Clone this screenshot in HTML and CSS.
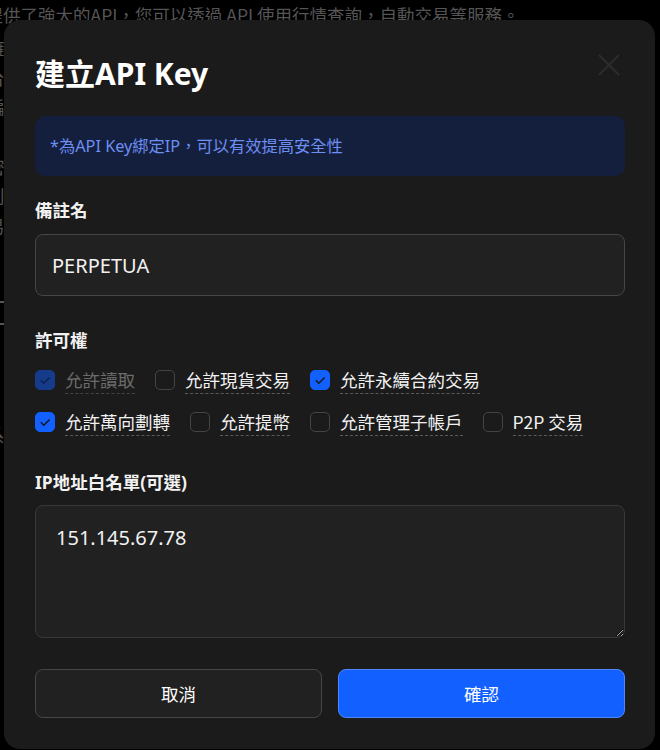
FILE: index.html
```html
<!DOCTYPE html>
<html lang="zh-Hant">
<head>
<meta charset="utf-8">
<title>建立API Key</title>
<link rel="stylesheet" href="styles.css">
</head>
<body>
<div class="backdrop">
  <p class="bg-top">提供了強大的API，您可以透過 API 使用行情查詢，自動交易等服務。</p>
  <div class="bg-col">
    <div class="bg-row">擁</div>
    <div class="bg-row">台</div>
    <div class="bg-row">編</div>
    <div class="bg-row">K</div>
    <div class="bg-row">密</div>
    <div class="bg-row">創</div>
    <div class="bg-row">易</div>
    <div class="bg-gap"></div>
    <div class="bg-dash"></div>
    <div class="bg-dash"></div>
    <div class="bg-gap2"></div>
    <div class="bg-row">系</div>
  </div>
</div>

<div class="modal">
  <div class="modal-head">
    <h2 class="title">建立API Key</h2>
    <button class="close" aria-label="close">
      <svg viewBox="0 0 24 24" width="24" height="24"><path d="M2 2L22 22M22 2L2 22" stroke="#2d2d2d" stroke-width="2" fill="none"/></svg>
    </button>
  </div>

  <div class="alert">*為API Key綁定IP，可以有效提高安全性</div>

  <div class="field-label">備註名</div>
  <input class="text-input" type="text" value="PERPETUA">

  <div class="field-label perm-label">許可權</div>
  <div class="perms">
    <label class="perm disabled">
      <span class="cb checked"><svg viewBox="0 0 20 20"><path d="M5.8 10.3L8.8 13.2L14.6 7.5" /></svg></span>
      <span class="perm-text">允許讀取</span>
    </label>
    <label class="perm">
      <span class="cb"></span>
      <span class="perm-text">允許現貨交易</span>
    </label>
    <label class="perm">
      <span class="cb checked"><svg viewBox="0 0 20 20"><path d="M5.8 10.3L8.8 13.2L14.6 7.5" /></svg></span>
      <span class="perm-text">允許永續合約交易</span>
    </label>
    <label class="perm">
      <span class="cb checked"><svg viewBox="0 0 20 20"><path d="M5.8 10.3L8.8 13.2L14.6 7.5" /></svg></span>
      <span class="perm-text">允許萬向劃轉</span>
    </label>
    <label class="perm">
      <span class="cb"></span>
      <span class="perm-text">允許提幣</span>
    </label>
    <label class="perm">
      <span class="cb"></span>
      <span class="perm-text">允許管理子帳戶</span>
    </label>
    <label class="perm">
      <span class="cb"></span>
      <span class="perm-text">P2P 交易</span>
    </label>
  </div>

  <div class="field-label ip-label">IP地址白名單(可選)</div>
  <textarea class="ip-input">151.145.67.78</textarea>

  <div class="actions">
    <button class="btn btn-cancel">取消</button>
    <button class="btn btn-confirm">確認</button>
  </div>
</div>
</body>
</html>
```

FILE: styles.css
```css
html, body {
  margin: 0;
  padding: 0;
}

body {
  width: 660px;
  height: 750px;
  overflow: hidden;
  position: relative;
  background: #000;
  font-family: "Noto Sans", "Noto Sans CJK TC", sans-serif;
  color: #f2f2f2;
}

.backdrop {
  color: #555;
  font-size: 17.5px;
  font-family: "Noto Sans CJK TC", sans-serif;
}

.bg-top {
  margin: 3px 0 0 -14.5px;
  line-height: 24px;
  white-space: nowrap;
}

.bg-col {
  margin: 6px 0 0 -13px;
}

.bg-row {
  height: 29.7px;
  line-height: 29.7px;
}

.bg-gap {
  height: 60px;
}

.bg-dash {
  width: 17px;
  height: 2px;
  background: #555;
  margin-bottom: 20px;
}

.bg-gap2 {
  height: 75px;
}

/* modal */
.modal {
  position: absolute;
  left: 4px;
  top: 20px;
  width: 651px;
  box-sizing: border-box;
  padding: 34px 30px 31px 31px;
  background: #1b1b1b;
  border-radius: 16px;
  display: flex;
  flex-direction: column;
}

.modal-head {
  display: flex;
  justify-content: space-between;
  align-items: flex-start;
}

.title {
  margin: 0;
  font-size: 30px;
  line-height: 40px;
  font-weight: 700;
  color: #fff;
  font-family: "Noto Sans", "Noto Sans CJK TC", sans-serif;
}

.close {
  margin: -1px 4px 0 0;
  padding: 0;
  border: 0;
  background: transparent;
  width: 24px;
  height: 24px;
  display: flex;
}

.alert {
  margin-top: 22px;
  padding: 18px 15px;
  line-height: 24px;
  font-size: 16.25px;
  background: #141f3e;
  color: #6d8ef2;
  border-radius: 10px;
}

.field-label {
  margin-top: 22px;
  font-size: 17.5px;
  line-height: 24px;
  font-weight: 700;
  color: #f2f2f2;
}

.perm-label {
  margin-top: 32px;
}

.ip-label {
  margin-top: 34px;
}

.text-input {
  margin: 12px 0 0;
  height: 62px;
  box-sizing: border-box;
  padding: 0 16px;
  background: #212121;
  border: 1px solid #464646;
  border-radius: 8px;
  font-family: "Noto Sans", "Noto Sans CJK TC", sans-serif;
  font-size: 20px;
  color: #f2f2f2;
  outline: none;
}

.perms {
  margin-top: 17px;
  display: flex;
  flex-wrap: wrap;
  gap: 17px 20px;
}

.perm {
  display: flex;
  align-items: flex-start;
  gap: 10px;
}

.cb {
  margin-top: 1px;
  width: 20px;
  height: 20px;
  box-sizing: border-box;
  border: 1px solid #444;
  border-radius: 5px;
  display: flex;
}

.cb svg {
  width: 20px;
  height: 20px;
  margin: -1px;
}

.cb svg path {
  fill: none;
  stroke: #151515;
  stroke-width: 1.4;
}

.cb.checked {
  background: #1260ff;
  border-color: #1260ff;
}

.disabled .cb.checked {
  background: #163b8b;
  border-color: #163b8b;
}

.disabled .cb svg path {
  stroke: #0e2150;
}

.perm-text {
  font-family: "Noto Sans CJK TC", sans-serif;
  font-size: 17.5px;
  line-height: 22px;
  padding-bottom: 2px;
  border-bottom: 1px dashed #5a5a5a;
  color: #f2f2f2;
  white-space: nowrap;
}

.disabled .perm-text {
  color: #6b6b6b;
  border-bottom-color: #444;
}

.ip-input {
  margin: 11px 0 0;
  height: 133px;
  box-sizing: border-box;
  padding: 19px 20px;
  background: #212121;
  border: 1px solid #383838;
  border-radius: 8px;
  font-family: "Noto Sans", "Noto Sans CJK TC", sans-serif;
  font-size: 20px;
  line-height: 26px;
  color: #f2f2f2;
  resize: vertical;
  outline: none;
}

.actions {
  margin-top: 31px;
  display: flex;
  gap: 16px;
}

.btn {
  flex: 1;
  height: 49px;
  border-radius: 8px;
  font-family: "Noto Sans CJK TC", sans-serif;
  font-size: 17.5px;
  color: #fff;
  cursor: pointer;
}

.btn-cancel {
  background: #212121;
  border: 1px solid #474747;
}

.btn-confirm {
  background: #1260ff;
  border: 1px solid #4d88ff;
}
```
